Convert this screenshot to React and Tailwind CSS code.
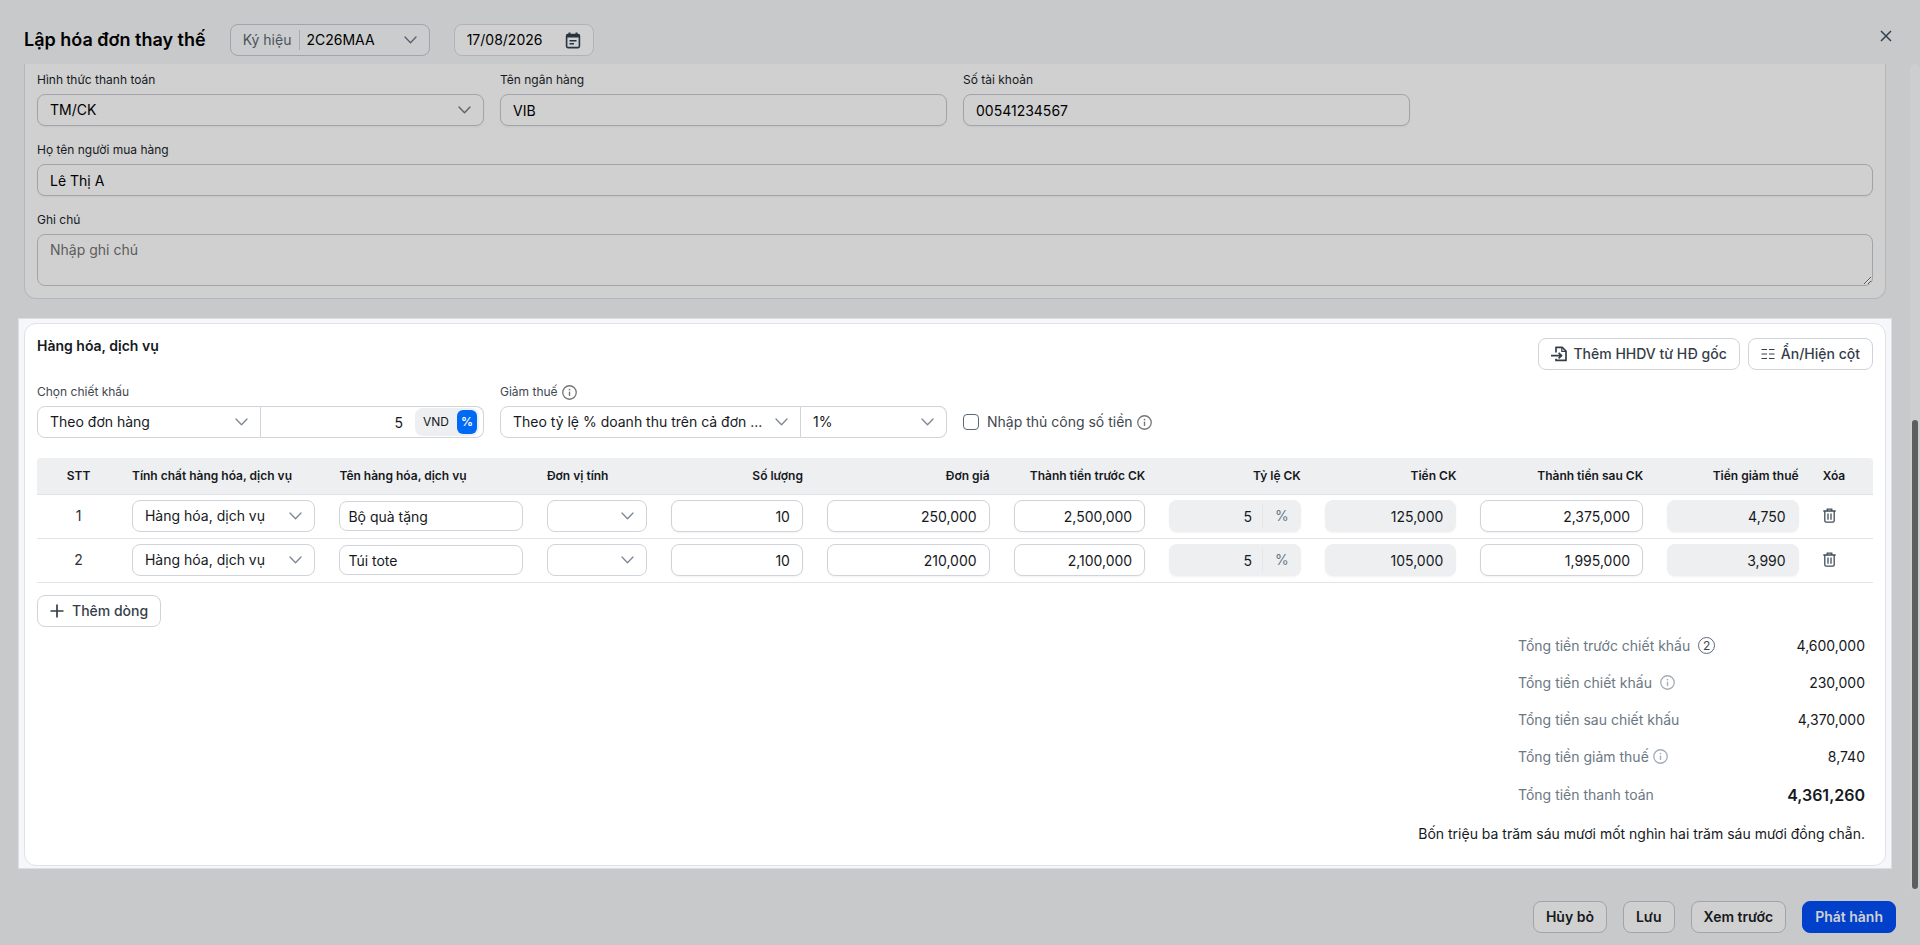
import React, { useState } from 'react';

const COLUMNS = [
  { label: 'STT', width: 80, align: 'text-center' },
  { label: 'Tính chất hàng hóa, dịch vụ', width: 200, align: 'text-left' },
  { label: 'Tên hàng hóa, dịch vụ', width: 200, align: 'text-left' },
  { label: 'Đơn vị tính', width: 120, align: 'text-left' },
  { label: 'Số lượng', width: 150, align: 'text-right' },
  { label: 'Đơn giá', width: 180, align: 'text-right' },
  { label: 'Thành tiền trước CK', width: 150, align: 'text-right' },
  { label: 'Tỷ lệ CK', width: 150, align: 'text-right' },
  { label: 'Tiền CK', width: 150, align: 'text-right' },
  { label: 'Thành tiền sau CK', width: 180, align: 'text-right' },
  { label: 'Tiền giảm thuế', width: 150, align: 'text-right' },
  { label: 'Xóa', width: 60, align: 'text-left' },
];

const ITEMS = [
  { name: 'Bộ quà tặng', qty: '10', price: '250,000', before: '2,500,000', rate: '5', discount: '125,000', after: '2,375,000', tax: '4,750' },
  { name: 'Túi tote', qty: '10', price: '210,000', before: '2,100,000', rate: '5', discount: '105,000', after: '1,995,000', tax: '3,990' },
];

const Chevron = ({ className = '' }) => (
  <svg className={`pointer-events-none ${className}`} width="13" height="8" viewBox="0 0 13 8" fill="none" stroke="currentColor" strokeWidth="1.3" strokeLinecap="round" strokeLinejoin="round">
    <path d="M1 1l5.5 5.7L12 1" />
  </svg>
);

const InfoIcon = ({ className = '' }) => (
  <svg className={className} width="15" height="15" viewBox="0 0 14 14" fill="none" stroke="currentColor">
    <circle cx="7" cy="7" r="6.3" strokeWidth="1.2" />
    <path d="M7 6.2v4" strokeWidth="1.3" />
    <path d="M7 3.6v1.4" strokeWidth="1.4" />
  </svg>
);

const CalendarIcon = () => (
  <svg width="16" height="17" viewBox="0 0 16 17" fill="none" stroke="#263443">
    <rect x="1.6" y="2.6" width="12.8" height="13" rx="1.3" strokeWidth="1.6" />
    <path d="M1.5 2.5h13v3h-13z" fill="#263443" stroke="none" />
    <path d="M4.5 .5v3M11.5 .5v3" strokeWidth="2" />
    <path d="M4.5 8.7h7M4.5 11.7h4.5" strokeWidth="1.5" />
  </svg>
);

const ImportIcon = () => (
  <svg width="16" height="16" viewBox="0 0 16 16" fill="none" stroke="currentColor" strokeWidth="1.7" strokeLinejoin="round">
    <path d="M5 6.5V1.4h6.2L15 5v9.4H5v-1.6" />
    <path d="M10.8 1.6v3.8H15" strokeWidth="1.2" />
    <path d="M0 9.6h10M7.6 6.8l3 2.8-3 2.8" />
  </svg>
);

const ColumnsIcon = () => (
  <svg width="14" height="12" viewBox="0 0 14 12" stroke="currentColor" strokeWidth="1.2">
    <path d="M0.5 1.5h5.5M8 1.5h5.5M0.5 6h5.5M8 6h5.5M0.5 10.5h5.5M8 10.5h5.5" />
  </svg>
);

const TrashIcon = () => (
  <svg width="13" height="15" viewBox="0 0 13 15" fill="none" stroke="#414d5a" strokeWidth="1.3">
    <path d="M.3 3h12.4M4.2 2.8V1.2h4.6v1.6M1.8 3.2v9.6c0 .8.5 1.4 1.3 1.4h6.8c.8 0 1.3-.6 1.3-1.4V3.2M5 5.5v6.2M8 5.5v6.2" />
  </svg>
);

const inputBase = 'h-8 w-full rounded-lg border px-3 text-sm outline-none';
const dimInput = `${inputBase} border-[#a2a4aa] bg-[#d0d0d0] text-black shadow-xs`;
const lightInput = `${inputBase} border-[#d0d3d9] bg-white text-[#16191d]`;

const SelectBox = ({ id, label, value, className = lightInput, chevron = 'text-[#7b8794]' }) => (
  <div className="relative w-full">
    <select id={id} aria-label={label} className={`${className} appearance-none`}>
      <option>{value}</option>
    </select>
    <Chevron className={`absolute right-[13px] top-3 ${chevron}`} />
  </div>
);

const DimField = ({ id, label, children }) => (
  <div className="flex flex-col gap-1.5">
    <label htmlFor={id} className="text-xs leading-4 text-[#16191d]">{label}</label>
    {children}
  </div>
);

const MoneyInput = ({ label, value, disabled }) => (
  <input
    aria-label={label}
    defaultValue={value}
    disabled={disabled}
    className={`${inputBase} text-right text-[#16191d] shadow-xs ${disabled ? 'border-[#eeeff1] bg-[#eeeff1]' : 'border-[#d0d3d9] bg-white'}`}
  />
);

const ItemRow = ({ item, index }) => (
  <tr className="[&>td]:border-b [&>td]:border-[#e2e4e8] [&>td]:px-3 [&>td]:pt-[5px] [&>td]:pb-1.5">
    <td className="text-center text-sm text-[#2b3036]">{index + 1}</td>
    <td><SelectBox label="Tính chất hàng hóa, dịch vụ" value="Hàng hóa, dịch vụ" /></td>
    <td>
      <input aria-label="Tên hàng hóa, dịch vụ" defaultValue={item.name} className="block h-[30px] w-full rounded-lg border border-[#d0d3d9] bg-white px-2 text-sm text-[#16191d] outline-none" />
    </td>
    <td><SelectBox label="Đơn vị tính" value="" /></td>
    <td><MoneyInput label="Số lượng" value={item.qty} /></td>
    <td><MoneyInput label="Đơn giá" value={item.price} /></td>
    <td><MoneyInput label="Thành tiền trước CK" value={item.before} /></td>
    <td>
      <div className="flex h-8 items-center rounded-lg bg-[#eeeff1] shadow-xs">
        <input aria-label="Tỷ lệ CK" disabled defaultValue={item.rate} className="h-6 w-full min-w-0 border-r border-[#e3e6ea] pr-2.5 text-right text-sm text-[#16191d]" />
        <span className="shrink-0 px-3 text-sm text-[#6b7787]">%</span>
      </div>
    </td>
    <td><MoneyInput label="Tiền CK" value={item.discount} disabled /></td>
    <td><MoneyInput label="Thành tiền sau CK" value={item.after} /></td>
    <td><MoneyInput label="Tiền giảm thuế" value={item.tax} disabled /></td>
    <td>
      <button type="button" aria-label="Xóa" className="block pb-0.5"><TrashIcon /></button>
    </td>
  </tr>
);

const SummaryRow = ({ label, value, children }) => (
  <div className="flex h-[37px] items-center justify-between">
    <span className="flex items-center text-[#6b7783]">{label}{children}</span>
    <span className="text-[#16191d]">{value}</span>
  </div>
);

const outlineButton = 'flex h-8 items-center rounded-lg border border-[#d0d3d9] bg-white px-3 text-sm font-medium text-[#343e49]';
const footerButton = 'h-8 rounded-lg border border-[#a2a4aa] bg-[#d0d0d0] px-3 text-sm font-semibold text-[#16191d]';

const App = () => {
  const [manual, setManual] = useState(false);

  return (
    <div className="flex h-screen flex-col overflow-hidden bg-[#c8c9cb] font-['Inter',sans-serif] text-sm text-[#16191d]">
      <header className="flex h-16 shrink-0 items-start justify-between pt-6 pr-7 pl-6">
        <div className="flex items-center gap-6">
          <h1 className="text-lg leading-8 font-semibold text-black">Lập hóa đơn thay thế</h1>
          <div className="relative flex h-8 w-[200px] items-center rounded-lg border border-[#a2a4aa] bg-[#cbcccd] pl-3">
            <label htmlFor="symbol" className="shrink-0 border-r border-[#a9acb1] pr-2 text-[#4a545f]">Ký hiệu</label>
            <select id="symbol" className="w-full appearance-none pl-1.5 text-black outline-none">
              <option>2C26MAA</option>
            </select>
            <Chevron className="absolute right-3 text-[#55606c]" />
          </div>
          <div className="flex h-8 w-[140px] items-center rounded-lg border border-[#b0b2b6] bg-[#d0d0d0] pr-3 pl-3">
            <input aria-label="Ngày hóa đơn" defaultValue="17/08/2026" className="w-full min-w-0 text-black outline-none" />
            <span className="shrink-0"><CalendarIcon /></span>
          </div>
        </div>
        <button type="button" aria-label="Đóng" className="mt-1.5">
          <svg width="12" height="12" viewBox="0 0 12 12" stroke="#34414e" strokeWidth="1.5"><path d="M1 1l10 10M11 1L1 11" /></svg>
        </button>
      </header>

      <div className="flex min-h-0 flex-1">
        <main className="min-w-0 flex-1 overflow-hidden px-[18px]">
          <section className="mx-1.5 flex flex-col gap-4 rounded-b-xl border border-t-0 border-[#b5b7ba] bg-[#d0d0d0] px-3 pt-2 pb-3">
            <div className="grid grid-cols-4 gap-4">
              <DimField id="payment" label="Hình thức thanh toán">
                <SelectBox id="payment" value="TM/CK" className={dimInput} chevron="text-[#55606c]" />
              </DimField>
              <DimField id="bank" label="Tên ngân hàng">
                <input id="bank" defaultValue="VIB" className={dimInput} />
              </DimField>
              <DimField id="account" label="Số tài khoản">
                <input id="account" defaultValue="00541234567" className={dimInput} />
              </DimField>
            </div>
            <DimField id="buyer" label="Họ tên người mua hàng">
              <input id="buyer" defaultValue="Lê Thị A" className={dimInput} />
            </DimField>
            <DimField id="note" label="Ghi chú">
              <textarea id="note" placeholder="Nhập ghi chú" className="block h-[52px] w-full rounded-lg border border-[#a2a4aa] px-3 py-[3px] text-sm leading-6 outline-none placeholder:text-[#5c5c5c]" />
            </DimField>
          </section>

          <div className="mt-[19px] border border-[#dcdee0] bg-[#f5f7fa] px-[5px] pt-1 pb-0.5">
            <section className="rounded-xl border border-[#dfe2e6] bg-white px-3 pt-3.5 pb-3">
              <div className="flex items-start justify-between">
                <h2 className="text-sm leading-4 font-semibold">Hàng hóa, dịch vụ</h2>
                <div className="flex gap-2">
                  <button type="button" className={`${outlineButton} gap-1.5`}><ImportIcon />Thêm HHDV từ HĐ gốc</button>
                  <button type="button" className={`${outlineButton} gap-1.5`}><ColumnsIcon />Ẩn/Hiện cột</button>
                </div>
              </div>

              <div className="mt-3.5 grid grid-cols-4 items-end gap-4">
                <div className="flex flex-col gap-1.5">
                  <label htmlFor="discount" className="text-xs leading-4 text-[#3f4750]">Chọn chiết khấu</label>
                  <div className="grid grid-cols-2">
                    <SelectBox id="discount" value="Theo đơn hàng" className="h-8 w-full rounded-l-lg border border-[#d0d3d9] px-3 text-sm outline-none" />
                    <div className="flex h-8 items-center rounded-r-lg border border-l-0 border-[#d0d3d9] pr-1">
                      <input aria-label="Mức chiết khấu" defaultValue="5" className="h-full w-full min-w-0 pr-3 text-right text-sm outline-none" />
                      <div className="flex h-7 shrink-0 items-center gap-2 rounded-lg bg-[#eeeff1] pr-0.5 pl-2 text-xs">
                        <button type="button">VND</button>
                        <button type="button" className="h-6 rounded-md bg-[#006af5] px-1 font-semibold text-white">%</button>
                      </div>
                    </div>
                  </div>
                </div>
                <div className="flex flex-col gap-1.5">
                  <label htmlFor="tax" className="flex h-4 items-center gap-1 text-xs text-[#3f4750]">Giảm thuế <InfoIcon className="text-[#757575]" /></label>
                  <div className="flex">
                    <div className="min-w-0 flex-[301]">
                      <SelectBox id="tax" value="Theo tỷ lệ % doanh thu trên cả đơn ..." className="h-8 w-full rounded-l-lg border border-[#d0d3d9] px-3 text-sm outline-none" />
                    </div>
                    <div className="min-w-0 flex-[146]">
                      <SelectBox label="Tỷ lệ giảm thuế" value="1%" className="h-8 w-full rounded-r-lg border border-l-0 border-[#d0d3d9] px-3 text-sm outline-none" />
                    </div>
                  </div>
                </div>
                <label className="flex h-8 items-center gap-2 text-[#3f4750]">
                  <input type="checkbox" checked={manual} onChange={(e) => setManual(e.target.checked)} className="size-4 appearance-none rounded border border-[#5b6877] checked:bg-[#006af5]" />
                  <span className="flex items-center gap-1">Nhập thủ công số tiền <InfoIcon className="text-[#757575]" /></span>
                </label>
              </div>

              <table className="mt-5 w-full table-fixed border-separate border-spacing-0">
                <colgroup>
                  {COLUMNS.map((col) => <col key={col.label} style={{ width: col.width }} />)}
                </colgroup>
                <thead>
                  <tr>
                    {COLUMNS.map((col) => (
                      <th key={col.label} className={`h-[37px] border-b border-[#dfe2e6] bg-[#eeeff1] px-3 text-xs font-semibold whitespace-nowrap first:rounded-tl last:rounded-tr ${col.align}`}>{col.label}</th>
                    ))}
                  </tr>
                </thead>
                <tbody>
                  {ITEMS.map((item, i) => <ItemRow key={item.name} item={item} index={i} />)}
                </tbody>
              </table>

              <button type="button" className={`${outlineButton} mt-3 gap-2`}>
                <svg width="14" height="14" viewBox="0 0 14 14" stroke="currentColor" strokeWidth="1.7"><path d="M7 .5v13M.5 7h13" /></svg>
                Thêm dòng
              </button>

              <div className="flex flex-col items-end pr-2">
                <div className="w-[347px]">
                  <SummaryRow label="Tổng tiền trước chiết khấu" value="4,600,000">
                    <span className="ml-2 flex size-[17px] items-center justify-center rounded-full border border-[#5b6877] text-xs text-[#3f4750]">2</span>
                  </SummaryRow>
                  <SummaryRow label="Tổng tiền chiết khấu" value="230,000"><InfoIcon className="ml-2 text-[#a3adb8]" /></SummaryRow>
                  <SummaryRow label="Tổng tiền sau chiết khấu" value="4,370,000" />
                  <SummaryRow label="Tổng tiền giảm thuế" value="8,740"><InfoIcon className="ml-1 text-[#a3adb8]" /></SummaryRow>
                  <div className="flex h-10 items-center justify-between">
                    <span className="text-[#6b7783]">Tổng tiền thanh toán</span>
                    <span className="text-base font-semibold">4,361,260</span>
                  </div>
                </div>
                <p className="leading-[38px]">Bốn triệu ba trăm sáu mươi mốt nghìn hai trăm sáu mươi đồng chẵn.</p>
              </div>
            </section>
          </div>
        </main>
        <div className="flex w-2.5 shrink-0 flex-col items-center rounded-t-full bg-[#cecece]">
          <div className="flex-[356]" />
          <div className="w-1.5 flex-[468] rounded-full bg-[#5e5e5e]" />
        </div>
      </div>

      <footer className="flex shrink-0 justify-end gap-4 px-6 py-3">
        <button type="button" className={footerButton}>Hủy bỏ</button>
        <button type="button" className={footerButton}>Lưu</button>
        <button type="button" className={footerButton}>Xem trước</button>
        <button type="button" className="h-8 rounded-lg border border-[#0040cb] bg-[#0040cb] px-3 text-sm font-semibold text-[#d0d0d0]">Phát hành</button>
      </footer>
    </div>
  );
};

export default App;
